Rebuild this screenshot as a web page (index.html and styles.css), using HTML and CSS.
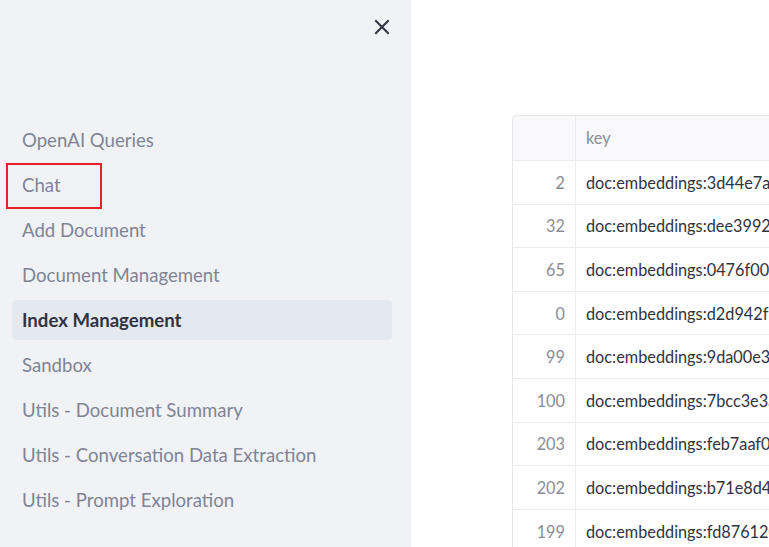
FILE: index.html
```html
<!DOCTYPE html>
<html>
<head>
<meta charset="utf-8">
<link rel="stylesheet" href="styles.css">
</head>
<body>
<aside class="sidebar">
  <div class="sidebar-top">
    <button class="close-btn" aria-label="Close">
      <svg width="16" height="16" viewBox="0 0 16 16"><path d="M2 2 L14 14 M14 2 L2 14" stroke="#31333f" stroke-width="2" stroke-linecap="square" fill="none"/></svg>
    </button>
  </div>
  <nav class="nav">
    <a class="nav-item">OpenAI Queries</a>
    <a class="nav-item marked">Chat<span class="mark"></span></a>
    <a class="nav-item">Add Document</a>
    <a class="nav-item">Document Management</a>
    <a class="nav-item active">Index Management</a>
    <a class="nav-item">Sandbox</a>
    <a class="nav-item">Utils - Document Summary</a>
    <a class="nav-item">Utils - Conversation Data Extraction</a>
    <a class="nav-item">Utils - Prompt Exploration</a>
  </nav>
</aside>
<main class="main">
  <div class="grid">
    <div class="row head"><div class="idx"></div><div class="key">key</div></div>
    <div class="row"><div class="idx">2</div><div class="key">doc:embeddings:3d44e7a1</div></div>
    <div class="row"><div class="idx">32</div><div class="key">doc:embeddings:dee3992b</div></div>
    <div class="row"><div class="idx">65</div><div class="key">doc:embeddings:0476f00d</div></div>
    <div class="row"><div class="idx">0</div><div class="key">doc:embeddings:d2d942f8</div></div>
    <div class="row"><div class="idx">99</div><div class="key">doc:embeddings:9da00e3f</div></div>
    <div class="row"><div class="idx">100</div><div class="key">doc:embeddings:7bcc3e3a</div></div>
    <div class="row"><div class="idx">203</div><div class="key">doc:embeddings:feb7aaf0</div></div>
    <div class="row"><div class="idx">202</div><div class="key">doc:embeddings:b71e8d4c</div></div>
    <div class="row"><div class="idx">199</div><div class="key">doc:embeddings:fd876120</div></div>
  </div>
</main>
</body>
</html>
```

FILE: styles.css
```css
* { box-sizing: border-box; }
html, body { margin: 0; padding: 0; }
body {
  display: flex;
  width: 769px;
  height: 547px;
  overflow: hidden;
  font-family: Lato, "Liberation Sans", sans-serif;
  background: #ffffff;
  color: #31333f;
}
.sidebar {
  width: 411px;
  flex: none;
  background: #f0f2f6;
  display: flex;
  flex-direction: column;
}
.sidebar-top {
  height: 120px;
  display: flex;
  justify-content: flex-end;
  align-items: flex-start;
  padding: 19px 21px 0 0;
}
.close-btn {
  border: 0;
  background: transparent;
  padding: 0;
  width: 16px;
  height: 16px;
  display: flex;
}
.nav {
  display: flex;
  flex-direction: column;
  gap: 5px;
  padding: 0 19px 0 12px;
}
.nav-item {
  position: relative;
  height: 40px;
  display: flex;
  align-items: center;
  padding-left: 10px;
  border-radius: 4px;
  font-size: 18.6px;
  color: #808495;
}
.nav-item.active {
  background: #e4e8ef;
  color: #31333f;
  font-weight: 700;
}
.mark {
  position: absolute;
  left: -6px;
  top: -2px;
  width: 96px;
  height: 46px;
  border: 2px solid #e8202a;
}
.main {
  flex: 1;
  min-width: 0;
  padding: 115px 0 0 101px;
  overflow: hidden;
}
.grid {
  width: 420px;
  border: 1px solid #e6e7ea;
  border-right: 0;
  border-bottom: 0;
  border-radius: 5px 0 0 0;
  overflow: hidden;
  font-size: 16.3px;
}
.row {
  display: flex;
  height: 43.6px;
  border-bottom: 1px solid #ebecef;
}
.row.head {
  height: 45px;
  background: #f9f9fb;
}
.idx {
  width: 63px;
  flex: none;
  border-right: 1px solid #ebecef;
  display: flex;
  align-items: center;
  justify-content: flex-end;
  padding-right: 10px;
  color: #8b8d95;
}
.key {
  flex: 1;
  display: flex;
  align-items: center;
  padding-left: 10px;
  white-space: nowrap;
  overflow: hidden;
}
.head .key { color: #8b8d95; padding-bottom: 2px; }
```
